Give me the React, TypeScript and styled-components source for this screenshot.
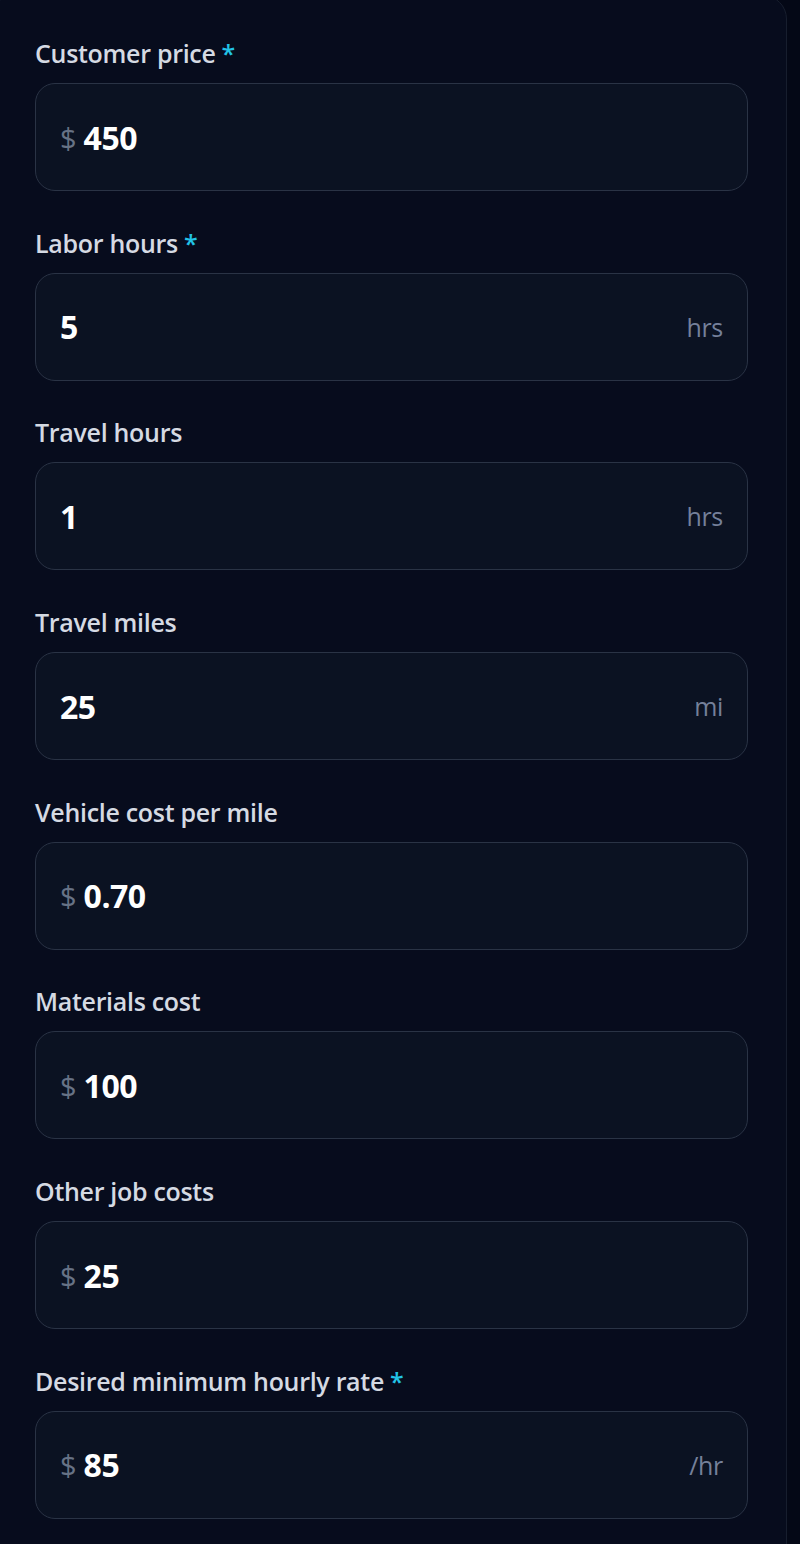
import React from 'react';
import styled, { createGlobalStyle } from 'styled-components';

const GlobalStyle = createGlobalStyle`
  html, body {
    margin: 0;
    padding: 0;
    background: #040816;
  }
  body {
    font-family: 'Open Sans', 'Noto Sans', sans-serif;
    -webkit-font-smoothing: antialiased;
  }
`;

const Page = styled.div`
  width: 800px;
  height: 1544px;
  overflow: hidden;
  background: #040816;
`;

const Card = styled.div`
  width: 797px;
  min-height: 1600px;
  margin: -5px 0 0 -10px;
  box-sizing: border-box;
  padding: 38px 38px 0 44px;
  background: #070c1d;
  border: 1px solid #171e2e;
  border-radius: 24px;
  display: flex;
  flex-direction: column;
  gap: 32.7px;
`;

const Field = styled.div`
  display: flex;
  flex-direction: column;
  gap: 13px;
`;

const Label = styled.label`
  padding-top: 2px;
  font-size: 25px;
  line-height: 34px;
  font-weight: 600;
  color: #d5dae3;
  letter-spacing: -0.3px;
`;

const Required = styled.span`
  color: #22c3e6;
  margin-left: 6px;
`;

const InputBox = styled.div`
  height: 108px;
  box-sizing: border-box;
  display: flex;
  align-items: center;
  padding: 0 24px;
  background: #0b1222;
  border: 1.5px solid #2a3345;
  border-radius: 20px;
`;

const Prefix = styled.span`
  font-size: 29px;
  color: #677286;
  margin-right: 7px;
`;

const Value = styled.span`
  flex: 1;
  font-size: 32px;
  font-weight: 700;
  color: #ffffff;
  letter-spacing: -0.5px;
`;

const Suffix = styled.span`
  font-size: 25px;
  color: #75809a;
  letter-spacing: -0.3px;
`;

type Row = {
  label: string;
  value: string;
  required?: boolean;
  prefix?: string;
  suffix?: string;
};

const rows: Row[] = [
  { label: 'Customer price', value: '450', required: true, prefix: '$' },
  { label: 'Labor hours', value: '5', required: true, suffix: 'hrs' },
  { label: 'Travel hours', value: '1', suffix: 'hrs' },
  { label: 'Travel miles', value: '25', suffix: 'mi' },
  { label: 'Vehicle cost per mile', value: '0.70', prefix: '$' },
  { label: 'Materials cost', value: '100', prefix: '$' },
  { label: 'Other job costs', value: '25', prefix: '$' },
  { label: 'Desired minimum hourly rate', value: '85', required: true, prefix: '$', suffix: '/hr' },
];

export default function App() {
  return (
    <>
      <GlobalStyle />
      <Page>
        <Card>
          {rows.map((r) => (
            <Field key={r.label}>
              <Label>
                {r.label}
                {r.required && <Required>*</Required>}
              </Label>
              <InputBox>
                {r.prefix && <Prefix>{r.prefix}</Prefix>}
                <Value>{r.value}</Value>
                {r.suffix && <Suffix>{r.suffix}</Suffix>}
              </InputBox>
            </Field>
          ))}
        </Card>
      </Page>
    </>
  );
}
